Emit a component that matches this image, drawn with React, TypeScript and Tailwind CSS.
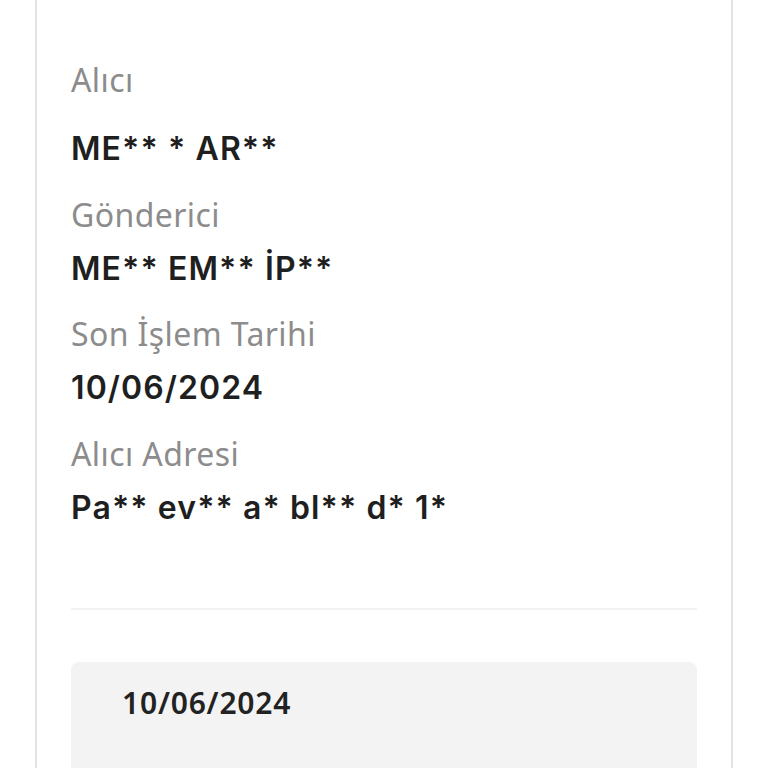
import React from "react";

const font = { fontFamily: '"Noto Sans", "Open Sans", sans-serif' };
const valueFont = { fontFamily: 'Inter, "Noto Sans", sans-serif' };

function Label({ children, className = "" }: { children: React.ReactNode; className?: string }) {
  return (
    <div className={`text-[32px] leading-[40px] text-[#8c8c8c] font-normal tracking-[0.4px] ${className}`}>{children}</div>
  );
}

function Value({ children, className = "" }: { children: React.ReactNode; className?: string }) {
  return (
    <div
      className={`text-[32px] leading-[40px] text-[#1f1f1f] font-semibold tracking-[1.1px] ${className}`}
      style={valueFont}
    >
      {children}
    </div>
  );
}

export default function App() {
  return (
    <div className="w-[768px] h-[768px] overflow-hidden bg-white" style={font}>
      <div className="ml-[35px] w-[698px] h-[900px] border-x-2 border-[#e2e2e2] px-[34px] pt-[60px]">
        <Label>Alıcı</Label>
        <Value className="mt-[29px]">ME** * AR**</Value>
        <Label className="mt-[26px]">Gönderici</Label>
        <Value className="mt-[14px]">ME** EM** İP**</Value>
        <Label className="mt-[25px]">Son İşlem Tarihi</Label>
        <Value className="mt-[14px]">10/06/2024</Value>
        <Label className="mt-[26px]">Alıcı Adresi</Label>
        <Value className="mt-[14px]">Pa** ev** a* bl** d* 1*</Value>
        <div className="mt-[80px] h-[2px] bg-[#f2f2f2]" />
        <div className="mt-[52px] h-[200px] rounded-[8px] bg-[#f3f3f3] pl-[51px] pt-[21px]">
          <div className="text-[30px] leading-[40px] font-semibold text-[#222] tracking-[0.8px]">10/06/2024</div>
        </div>
      </div>
    </div>
  );
}
